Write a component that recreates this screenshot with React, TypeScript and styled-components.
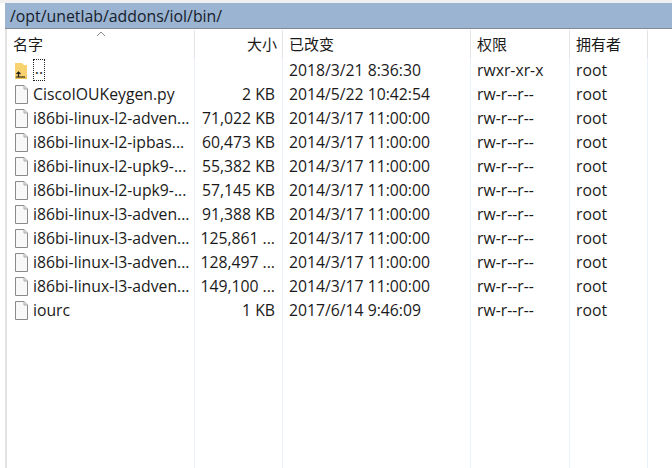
import React from 'react';
import styled, { createGlobalStyle } from 'styled-components';

const GlobalStyle = createGlobalStyle`
    html, body {
        margin: 0;
        padding: 0;
        background: #ffffff;
    }
`

const Window = styled.div`
    width: 672px;
    height: 468px;
    overflow: hidden;
    background: #ffffff;
    font-family: "Open Sans", "Noto Sans", "Noto Sans CJK SC", sans-serif;
    font-size: 15.75px;
    color: #1a1a1a;
`

const TopStrip = styled.div`
    height: 3px;
    background: #f0f0f0;
`

const PathBar = styled.div`
    height: 26px;
    margin-left: 5px;
    padding-left: 5px;
    box-sizing: border-box;
    background: #9ab4d1;
    border-bottom: 1px solid #858b94;
    font-size: 15.85px;
    line-height: 26px;
    color: #16202c;
`

const Table = styled.div`
    margin-left: 5px;
    height: 439px;
    border-left: 2px solid #e3e3e3;
    display: grid;
    grid-template-columns: 188px 88px 188px 99px 78px 1fr;
    grid-template-rows: 29px;
    grid-auto-rows: 24px;
    position: relative;
`

const Guides = styled.div`
    position: absolute;
    inset: 0;
    display: grid;
    grid-template-columns: 188px 88px 188px 99px 78px;
    pointer-events: none;
`

const Guide = styled.div`
    border-right: 1px solid #eaf1fb;
`

const Header = styled.div<{ $right?: boolean }>`
    margin-top: 2px;
    padding: 0 ${p => (p.$right ? '5px' : '6px')} 2px 6px;
    box-sizing: border-box;
    display: flex;
    align-items: center;
    justify-content: ${p => (p.$right ? 'flex-end' : 'flex-start')};
    border-right: 1px solid #e3e3e3;
    font-family: "Noto Sans CJK SC", sans-serif;
    font-size: 15px;
    background: #ffffff;
    position: relative;
    z-index: 1;
`

const HeaderFill = styled.div`
    height: 29px;
`

const SortArrow = styled.svg`
    position: absolute;
    left: 89px;
    top: 0;
`

const NameCell = styled.div`
    display: flex;
    align-items: center;
    gap: 4px;
    padding-left: 7px;
    white-space: nowrap;
    overflow: hidden;
`

const Cell = styled.div<{ $right?: boolean }>`
    display: flex;
    align-items: center;
    justify-content: ${p => (p.$right ? 'flex-end' : 'flex-start')};
    padding: ${p => (p.$right ? '0 8px 0 0' : '0 0 0 6px')};
    white-space: nowrap;
`

const UpName = styled.span`
    border: 1px dotted #222222;
    line-height: 17px;
    height: 22px;
    width: 12px;
    text-align: center;
    box-sizing: border-box;
`

const FileIcon = () => (
    <svg width="15" height="19" viewBox="0 0 15 19">
        <path d="M1.5 .5H10L13.5 4V18.5H1.5Z" fill="#f8f8f8" stroke="#8a8a8a" />
        <path d="M10 .5V4H13.5" fill="#e4e4e4" stroke="#a8a8a8" />
    </svg>
)

const UpIcon = () => (
    <svg width="15" height="19" viewBox="0 0 15 19">
        <path d="M1 2H8L10 4H13V18H1Z" fill="#f7d26f" />
        <path d="M1 15H13V18H1Z" fill="#ecc25a" />
        <path d="M2 16H11M4.5 16V11M2.5 13L4.5 11L6.5 13" fill="none" stroke="#1f1f1f" strokeWidth="1.2" />
    </svg>
)

interface FileRow {
    name: string;
    size: string;
    changed: string;
}

const files: FileRow[] = [
    { name: 'CiscoIOUKeygen.py', size: '2 KB', changed: '2014/5/22 10:42:54' },
    { name: 'i86bi-linux-l2-adven...', size: '71,022 KB', changed: '2014/3/17 11:00:00' },
    { name: 'i86bi-linux-l2-ipbas...', size: '60,473 KB', changed: '2014/3/17 11:00:00' },
    { name: 'i86bi-linux-l2-upk9-...', size: '55,382 KB', changed: '2014/3/17 11:00:00' },
    { name: 'i86bi-linux-l2-upk9-...', size: '57,145 KB', changed: '2014/3/17 11:00:00' },
    { name: 'i86bi-linux-l3-adven...', size: '91,388 KB', changed: '2014/3/17 11:00:00' },
    { name: 'i86bi-linux-l3-adven...', size: '125,861 ...', changed: '2014/3/17 11:00:00' },
    { name: 'i86bi-linux-l3-adven...', size: '128,497 ...', changed: '2014/3/17 11:00:00' },
    { name: 'i86bi-linux-l3-adven...', size: '149,100 ...', changed: '2014/3/17 11:00:00' },
    { name: 'iourc', size: '1 KB', changed: '2017/6/14 9:46:09' },
];

export default function App() {
    return (
        <Window>
            <GlobalStyle />
            <TopStrip />
            <PathBar>/opt/unetlab/addons/iol/bin/</PathBar>
            <Table>
                <Guides>
                    <Guide /><Guide /><Guide /><Guide /><Guide />
                </Guides>
                <Header>
                    名字
                    <SortArrow width="10" height="6" viewBox="0 0 10 6">
                        <path d="M1 5L5 1L9 5" fill="none" stroke="#8a8a8a" />
                    </SortArrow>
                </Header>
                <Header $right>大小</Header>
                <Header>已改变</Header>
                <Header>权限</Header>
                <Header>拥有者</Header>
                <HeaderFill />

                <NameCell><UpIcon /><UpName>..</UpName></NameCell>
                <Cell />
                <Cell>2018/3/21 8:36:30</Cell>
                <Cell>rwxr-xr-x</Cell>
                <Cell>root</Cell>
                <Cell />

                {files.map((f, i) => (
                    <React.Fragment key={i}>
                        <NameCell><FileIcon />{f.name}</NameCell>
                        <Cell $right>{f.size}</Cell>
                        <Cell>{f.changed}</Cell>
                        <Cell>rw-r--r--</Cell>
                        <Cell>root</Cell>
                        <Cell />
                    </React.Fragment>
                ))}
            </Table>
        </Window>
    );
}
